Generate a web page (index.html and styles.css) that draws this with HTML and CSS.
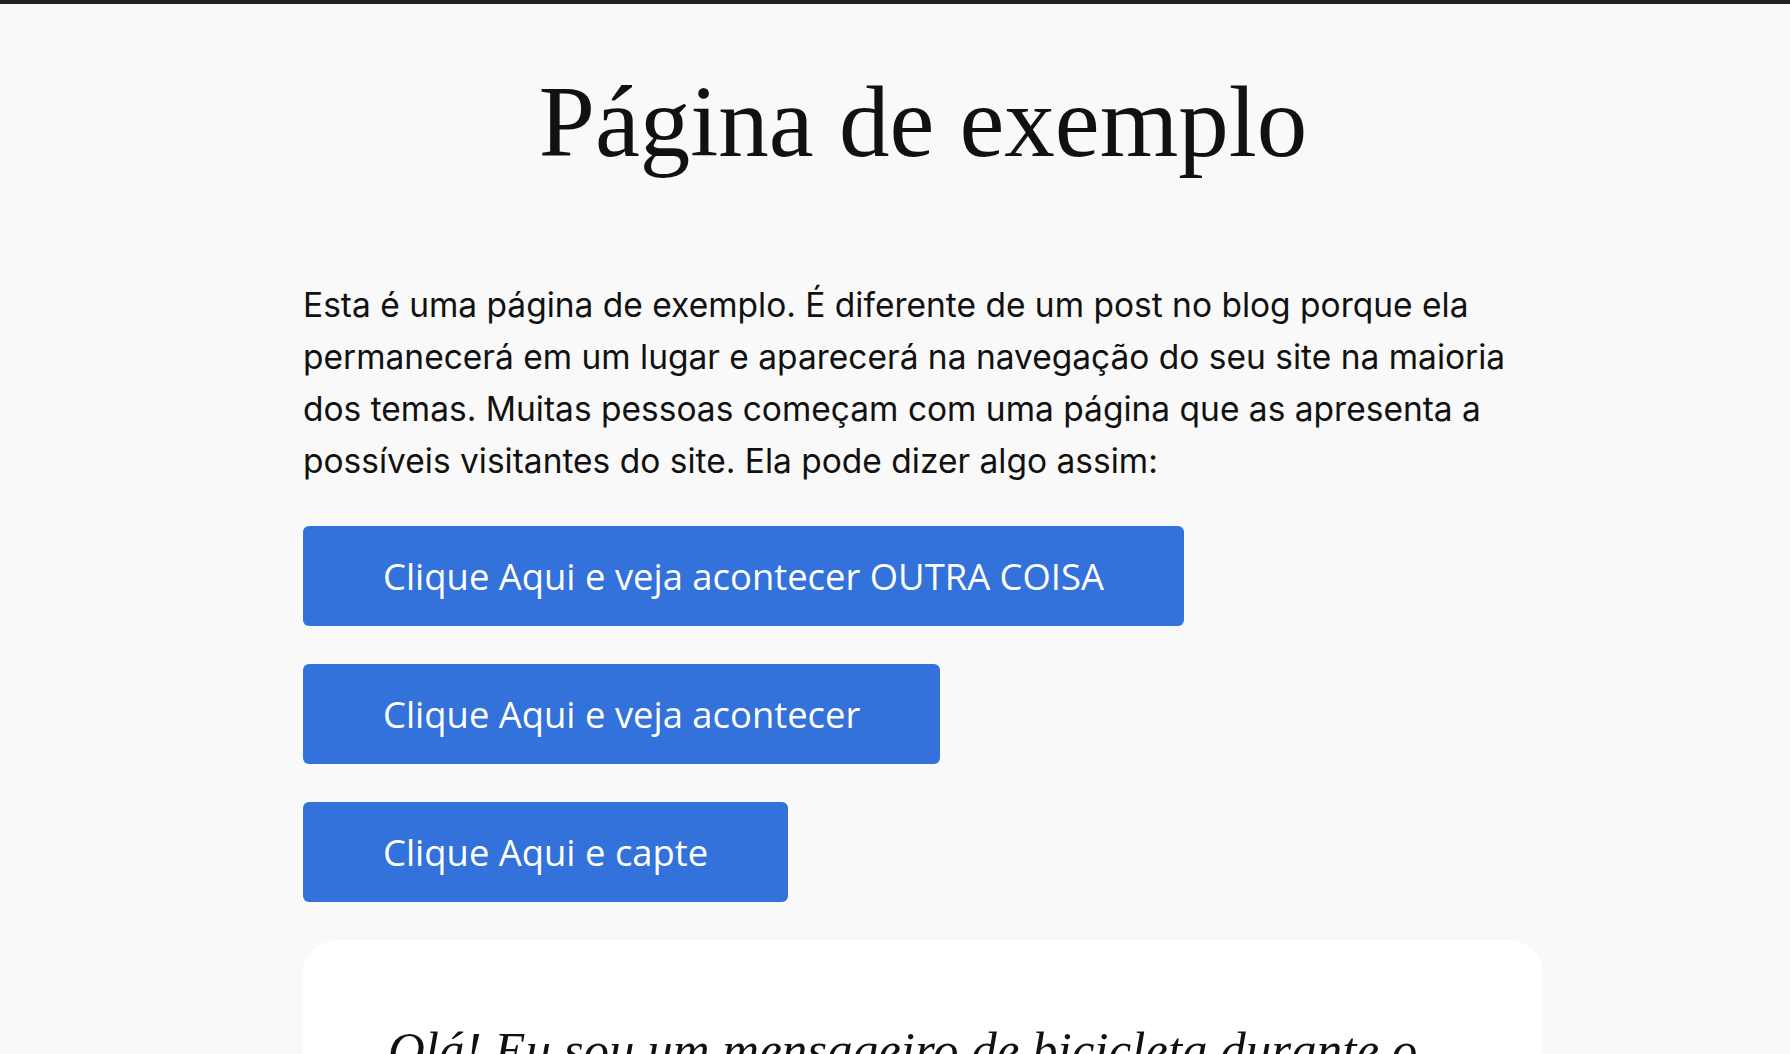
FILE: index.html
```html
<!DOCTYPE html>
<html lang="pt-BR">
<head>
<meta charset="utf-8">
<title>Página de exemplo</title>
<link rel="stylesheet" href="styles.css">
</head>
<body>
<div class="topbar"></div>
<main class="page">
  <h1 class="page-title">Página de exemplo</h1>
  <p class="intro">Esta é uma página de exemplo. É diferente de um post no blog porque ela permanecerá em um lugar e aparecerá na navegação do seu site na maioria dos temas. Muitas pessoas começam com uma página que as apresenta a possíveis visitantes do site. Ela pode dizer algo assim:</p>
  <div class="buttons">
    <a class="btn" href="#">Clique Aqui e veja acontecer OUTRA COISA</a>
    <a class="btn" href="#">Clique Aqui e veja acontecer</a>
    <a class="btn" href="#">Clique Aqui e capte</a>
  </div>
  <blockquote class="card">
    <p class="quote">Olá! Eu sou um mensageiro de bicicleta durante o dia, aspirante a ator à noite, e este é o meu site.</p>
  </blockquote>
</main>
</body>
</html>
```

FILE: styles.css
```css
html, body {
  margin: 0;
  padding: 0;
  background: #f9f9f9;
  color: #111111;
}
body {
  overflow: hidden;
  height: 1054px;
}
.topbar {
  height: 4px;
  background: #1d2327;
}
.page {
  margin-left: 303px;
  width: 1240px;
  display: flex;
  flex-direction: column;
  gap: 38px;
}
.page-title {
  margin: 58px 0 58px 0;
  font-family: "Liberation Serif", "Times New Roman", serif;
  font-weight: 400;
  font-size: 101px;
  line-height: 1.2;
  text-align: center;
}
.intro {
  margin: 0;
  font-family: Inter, "Noto Sans", sans-serif;
  font-size: 33.5px;
  line-height: 52px;
}
.buttons {
  margin-top: 1px;
  display: flex;
  flex-direction: column;
  align-items: flex-start;
  gap: 38px;
}
.btn {
  display: inline-block;
  background: #3371db;
  color: #ffffff;
  text-decoration: none;
  font-family: "Open Sans", "Noto Sans", sans-serif;
  font-size: 36.4px;
  line-height: 54px;
  padding: 23px 80px;
  border-radius: 6px;
}
.card {
  margin: 0;
  background: #ffffff;
  border-radius: 34px;
  padding: 80px 85px 60px 85px;
}
.quote {
  margin: 0;
  font-family: "Liberation Serif", "Times New Roman", serif;
  font-style: italic;
  font-size: 51px;
  line-height: 1.2;
}
```
